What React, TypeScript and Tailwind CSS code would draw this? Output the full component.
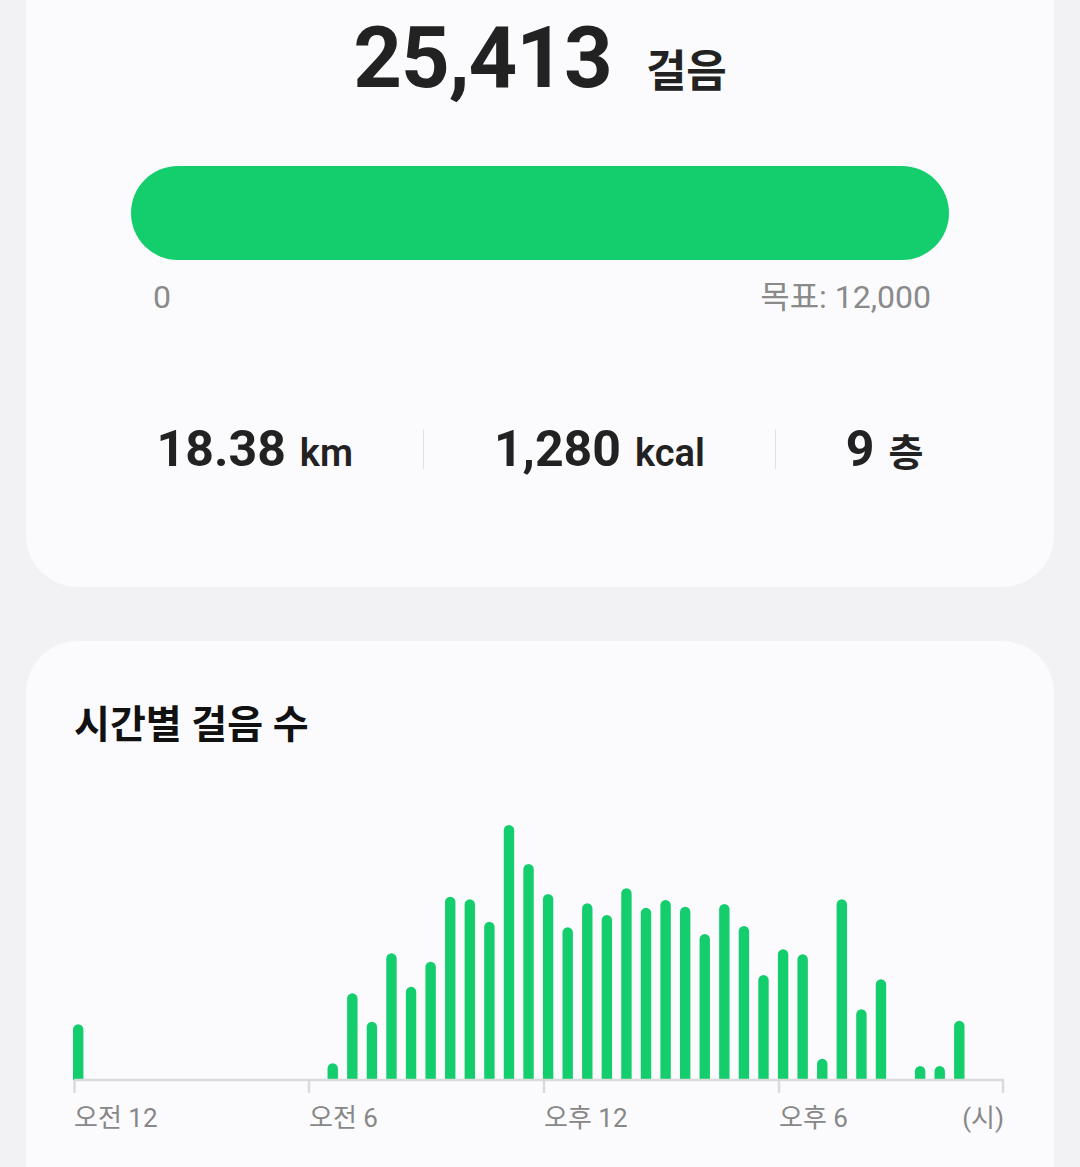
import React from "react";

const font = { fontFamily: 'Roboto, "Noto Sans CJK KR", sans-serif' };

// [slot (half hour), height px]
const bars: [number, number][] = [
  [0, 55.7],
  [13, 16.7],
  [14, 86.7],
  [15, 58.3],
  [16, 126.7],
  [17, 93.3],
  [18, 118.3],
  [19, 183.3],
  [20, 180.7],
  [21, 158.3],
  [22, 255],
  [23, 216],
  [24, 186],
  [25, 152.7],
  [26, 176.7],
  [27, 165],
  [28, 191.7],
  [29, 172.3],
  [30, 180],
  [31, 173.3],
  [32, 146],
  [33, 176],
  [34, 154],
  [35, 105],
  [36, 130.7],
  [37, 125.7],
  [38, 21.3],
  [39, 180.7],
  [40, 70.7],
  [41, 100.7],
  [43, 14],
  [44, 14],
  [45, 59.3],
];

const BASE = 280;
const BAR_W = 10.4;

function barPath(slot: number, h: number) {
  const x = -1 + slot * 19.58;
  const top = BASE - h;
  const r = BAR_W / 2;
  return `M${x},${BASE} V${top + r} A${r},${r} 0 0 1 ${x + BAR_W},${top + r} V${BASE} Z`;
}

function Stat({ value, unit }: { value: string; unit: string }) {
  return (
    <div className="flex items-baseline">
      <span className="text-[50px] font-bold leading-none text-[#222222]">{value}</span>
      <span className="ml-[14px] text-[38px] font-semibold leading-none text-[#222222]">{unit}</span>
    </div>
  );
}

export default function App() {
  return (
    <div className="h-[1167px] w-full overflow-hidden bg-[#f2f2f4]" style={font}>
      <section className="mx-[26px] h-[587px] rounded-b-[52px] bg-[#fbfbfd]">
        <div className="flex items-baseline justify-center gap-[34px] pt-[16px]">
          <span className="text-[85px] font-bold leading-none tracking-[-1px] text-[#222222]">25,413</span>
          <span className="text-[44px] font-bold leading-none text-[#222222]">걸음</span>
        </div>

        <div className="px-[105px]">
          <div className="mt-[65px] h-[94px] rounded-full bg-[#14ce6e]" />
          <div className="mt-[21px] flex justify-between pl-[22px] pr-[18px] text-[32px] leading-none text-[#8a8a8a]">
            <span>0</span>
            <span>목표: 12,000</span>
          </div>
        </div>

        <div className="mt-[111px] flex items-center justify-center gap-[70px]">
          <Stat value="18.38" unit="km" />
          <div className="h-[40px] w-px bg-[#e2e2e4]" />
          <Stat value="1,280" unit="kcal" />
          <div className="h-[40px] w-px bg-[#e2e2e4]" />
          <Stat value="9" unit="층" />
        </div>
      </section>

      <section className="mx-[26px] mt-[54px] h-[600px] rounded-t-[52px] bg-[#fbfbfd] px-[48px] pt-[65px]">
        <h2 className="text-[39px] font-bold leading-none text-[#111111]">시간별 걸음 수</h2>

        <svg className="mt-[55px] block overflow-visible" width={932} height={296} viewBox="0 0 932 296">
          {bars.map(([slot, h]) => (
            <path key={slot} d={barPath(slot, h)} fill="#14ce6e" />
          ))}
          <line x1={0} y1={280} x2={930} y2={280} stroke="#dadadc" strokeWidth={2.4} />
          {[0.5, 235, 470, 705, 929].map((x) => (
            <line key={x} x1={x} y1={280} x2={x} y2={293} stroke="#dadadc" strokeWidth={2.4} />
          ))}
        </svg>

        <div className="mt-[9px] flex w-[930px] text-[26px] leading-none text-[#878787]">
          <span className="w-[235px]">오전 12</span>
          <span className="w-[235px]">오전 6</span>
          <span className="w-[235px]">오후 12</span>
          <div className="flex flex-1 justify-between">
            <span>오후 6</span>
            <span>(시)</span>
          </div>
        </div>
      </section>
    </div>
  );
}
